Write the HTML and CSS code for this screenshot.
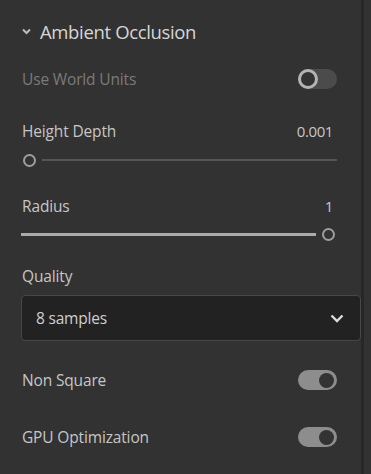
FILE: index.html
```html
<!DOCTYPE html>
<html lang="en">
<head>
    <meta charset="UTF-8">
    <meta name="viewport" content="width=device-width, initial-scale=1.0">
    <title>Ambient Occlusion</title>
    <link rel="stylesheet" href="styles.css">
</head>
<body>
    <div class="layout">
        <div class="panel">
            <div class="section-header">
                <svg class="caret" width="9" height="7" viewBox="0 0 9 7">
                    <path d="M1 1.5 L4.5 5 L8 1.5" fill="none" stroke="#bcbcbc" stroke-width="2"/>
                </svg>
                <span class="section-title">Ambient Occlusion</span>
            </div>

            <div class="row row-first disabled">
                <span class="label">Use World Units</span>
                <div class="toggle"><div class="knob"></div></div>
            </div>

            <div class="field-head field-depth">
                <span class="label">Height Depth</span>
                <span class="value">0.001</span>
            </div>
            <div class="slider slider-min">
                <div class="thumb"></div>
                <div class="track"></div>
            </div>

            <div class="field-head field-radius">
                <span class="label">Radius</span>
                <span class="value">1</span>
            </div>
            <div class="slider slider-max">
                <div class="track filled"></div>
                <div class="thumb"></div>
            </div>

            <div class="field-head field-quality">
                <span class="label">Quality</span>
            </div>
            <div class="select">
                <span>8 samples</span>
                <svg width="14" height="9" viewBox="0 0 14 9">
                    <path d="M1.5 1.5 L7 7 L12.5 1.5" fill="none" stroke="#dcdcdc" stroke-width="2.4"/>
                </svg>
            </div>

            <div class="row row-square">
                <span class="label">Non Square</span>
                <div class="toggle on"><div class="knob"></div></div>
            </div>

            <div class="row row-gpu">
                <span class="label">GPU Optimization</span>
                <div class="toggle on"><div class="knob"></div></div>
            </div>
        </div>
        <div class="scrollbar"></div>
    </div>
</body>
</html>
```

FILE: styles.css
```css
body {
    margin: 0;
    background: #323232;
    font-family: "Open Sans", "Noto Sans", sans-serif;
    color: #c6c6c6;
}
.layout {
    display: flex;
    height: 474px;
}
.panel {
    width: 361px;
    box-sizing: border-box;
    padding: 16px 24px 0 21px;
}
.scrollbar {
    width: 3px;
    background: #272727;
}
.section-header {
    height: 30px;
    display: flex;
    align-items: center;
    padding-left: 1px;
}
.caret {
    margin-right: 9px;
    margin-top: 1px;
}
.section-title {
    font-size: 18.5px;
    color: #d6d6d6;
    letter-spacing: -0.35px;
}
.label {
    font-size: 15.5px;
    letter-spacing: -0.15px;
    padding-left: 1px;
}
.value {
    font-size: 15px;
    letter-spacing: -0.4px;
    padding-right: 4px;
}
.row {
    height: 26px;
    display: flex;
    align-items: center;
    justify-content: space-between;
}
.row-first {
    margin-top: 20px;
}
.row-square {
    margin-top: 26px;
}
.row-gpu {
    margin-top: 31px;
}
.disabled .label {
    color: #7a7a7a;
}
.toggle {
    width: 39px;
    height: 20px;
    border-radius: 10px;
    background: #4b4b4b;
    display: flex;
    align-items: center;
    box-sizing: border-box;
}
.toggle .knob {
    width: 20px;
    height: 20px;
    box-sizing: border-box;
    border-radius: 50%;
    border: 3px solid #b4b4b4;
    background: #333;
}
.toggle.on {
    background: #8d8d8d;
    justify-content: flex-end;
    padding-right: 3px;
}
.toggle.on .knob {
    width: 15px;
    height: 15px;
    border: none;
    background: #333;
}
.field-head {
    height: 20px;
    display: flex;
    align-items: center;
    justify-content: space-between;
}
.field-depth {
    margin-top: 29px;
}
.field-radius {
    margin-top: 28px;
}
.field-quality {
    margin-top: 24px;
}
.slider {
    height: 16px;
    display: flex;
    align-items: center;
    gap: 6px;
}
.slider-min {
    margin-top: 11px;
    padding-left: 2px;
}
.slider-max {
    margin-top: 10px;
    padding-right: 2px;
}
.thumb {
    width: 13px;
    height: 13px;
    box-sizing: border-box;
    border-radius: 50%;
    border: 2px solid #9e9e9e;
    flex-shrink: 0;
}
.track {
    flex: 1;
    height: 2px;
    background: #555;
}
.track.filled {
    height: 3px;
    background: #ababab;
}
.select {
    margin-top: 9px;
    margin-right: -24px;
    height: 46px;
    box-sizing: border-box;
    border: 1px solid #474747;
    border-radius: 4px;
    background: #222;
    display: flex;
    align-items: center;
    justify-content: space-between;
    padding: 0 16px 0 14px;
    font-size: 15.5px;
    letter-spacing: -0.2px;
    color: #cfcfcf;
}
```
